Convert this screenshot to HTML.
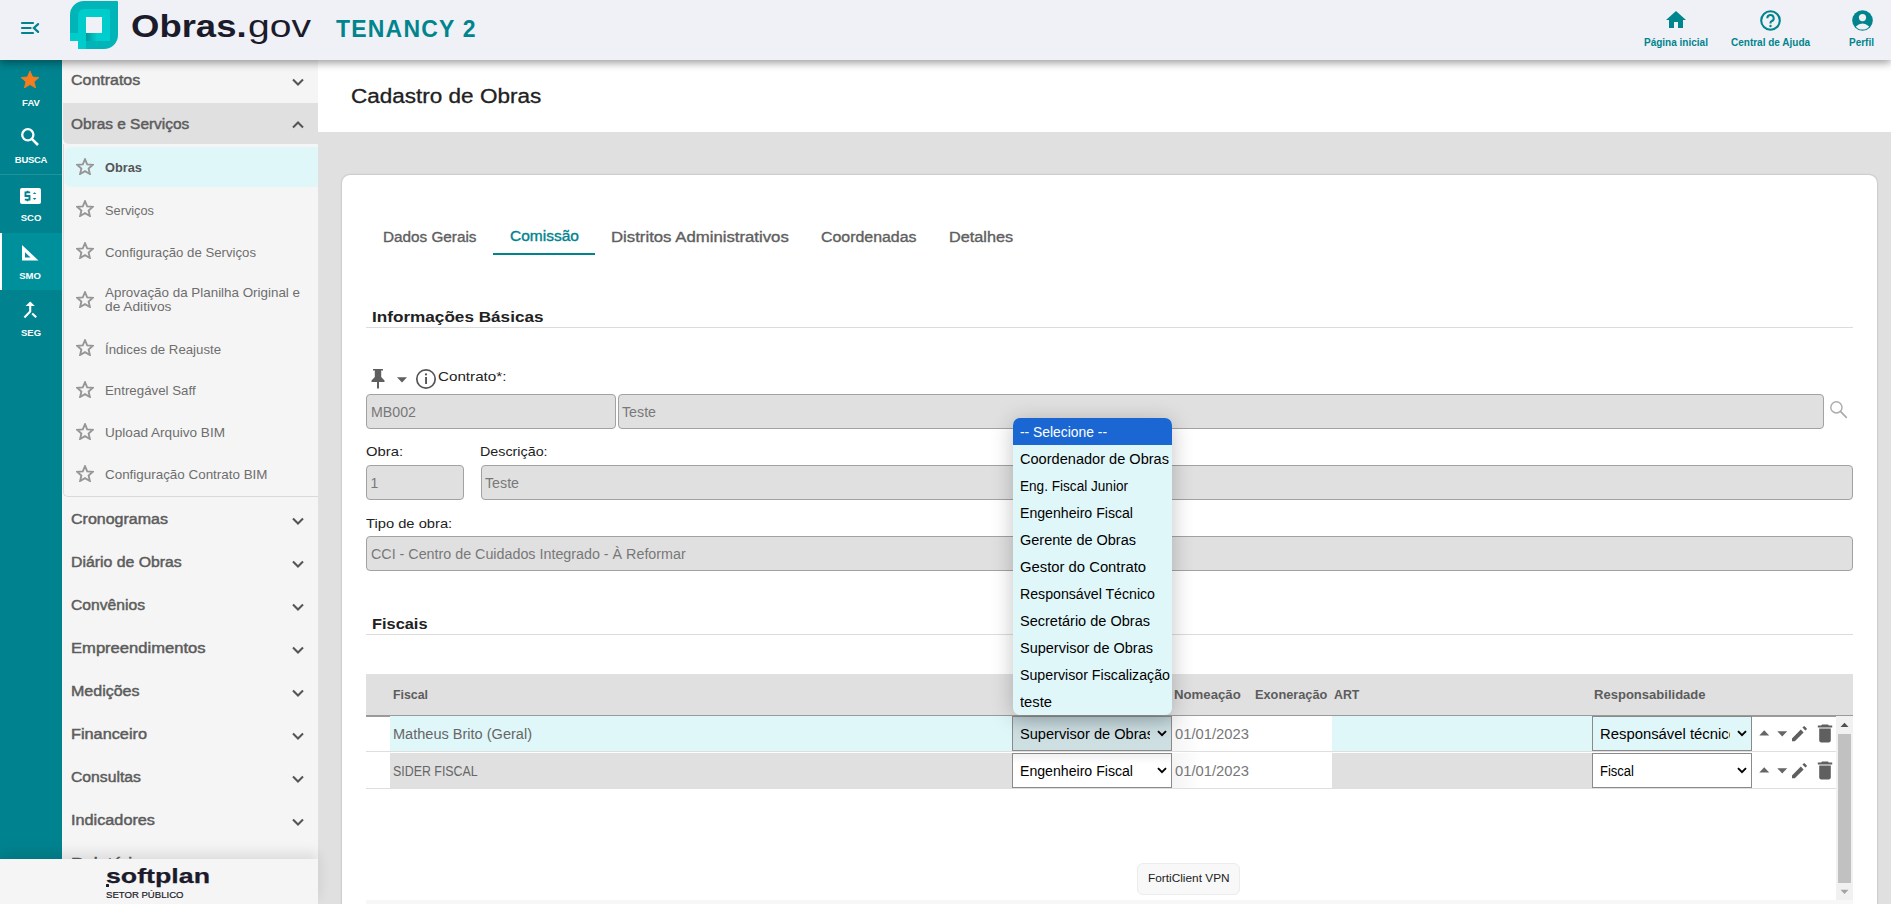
<!DOCTYPE html>
<html><head><meta charset="utf-8">
<style>
*{box-sizing:border-box;margin:0;padding:0}
html,body{width:1891px;height:904px;overflow:hidden;background:#e0e0e0;font-family:"Liberation Sans",sans-serif}
.abs{position:absolute}
.t{position:absolute;white-space:nowrap;line-height:1}
#header{position:absolute;left:0;top:0;width:1891px;height:60px;background:#eff1f6;z-index:10;box-shadow:0 3px 8px rgba(0,0,0,.38)}
#strip{position:absolute;left:0;top:60px;width:62px;height:844px;background:#00838f}
#panel{position:absolute;left:62px;top:60px;width:256px;height:799px;background:#f5f5f5;overflow:hidden}
#sfoot{position:absolute;left:0;top:859px;width:318px;height:45px;background:#f5f5f5;z-index:5;box-shadow:0 -6px 12px rgba(0,0,0,.10)}
#titlebar{position:absolute;left:318px;top:60px;width:1573px;height:72px;background:#fff}
#card{position:absolute;left:342px;top:175px;width:1535px;height:760px;background:#fff;border-radius:8px;box-shadow:0 0 2px rgba(0,0,0,.3)}
</style></head><body>
<div id="header">
  <svg class="abs" style="left:0;top:0" width="62" height="60" viewBox="0 0 62 60">
    <g stroke="#00838f" stroke-width="2.2" stroke-linecap="round" fill="none">
      <line x1="22" y1="23" x2="33" y2="23"/>
      <line x1="22" y1="28" x2="30.6" y2="28"/>
      <line x1="22" y1="33" x2="33" y2="33"/>
      <polyline points="38.1,24.1 33.9,28 38.1,31.9"/>
    </g>
  </svg>
  <svg class="abs" style="left:70px;top:1px" width="48" height="48" viewBox="0 0 48 48">
    <defs><linearGradient id="lg1" x1="0" x2="1" y1="0" y2="0"><stop offset="0" stop-color="#00989c"/><stop offset="0.45" stop-color="#00cdcd"/><stop offset="1" stop-color="#00cdcd"/></linearGradient></defs>
    <path d="M0,14 A14,14 0 0 1 14,0 L47,0 Q48,0 48,1 L48,34 A14,14 0 0 1 34,48 L8,48 L8,40 L0,40 Z" fill="#00b4b7"/>
    <path d="M8,14 A6,6 0 0 1 14,8 L38,8 Q40,8 40,10 L40,36 Q40,40 36,40 L8,40 Z" fill="#00cccc"/>
    <rect x="0" y="32" width="8" height="8" fill="#00cccc"/>
    <rect x="8" y="40" width="8" height="8" fill="#00cccc"/>
    <rect x="16" y="32" width="24" height="8" fill="url(#lg1)"/>
    <path d="M16,40 L36,40 Q40,40 40,36 L40,32 L16,32 Z" fill="url(#lg1)"/>
    <rect x="16" y="16" width="16" height="16" fill="#eff1f6"/>
  </svg>
  <div class="t" style="left:131px;top:10px;font-size:32px;font-weight:700;color:#1b1b2b;transform:scaleX(1.14);transform-origin:0 0">Obras.</div>
  <div class="t" style="left:248px;top:10px;font-size:32px;font-weight:400;color:#1b1b2b;transform:scaleX(1.22);transform-origin:0 0">gov</div>
  <div class="t" style="left:336px;top:18px;font-size:23px;font-weight:700;color:#00848e;letter-spacing:1.2px">TENANCY 2</div>

  <!-- right icons -->
  <svg class="abs" style="left:1665px;top:10px" width="22" height="20" viewBox="0 0 22 20">
    <path d="M11,1 L21,10 L18,10 L18,18 L13,18 L13,12 L9,12 L9,18 L4,18 L4,10 L1,10 Z" fill="#00848e"/>
  </svg>
  <div class="t" style="left:1644px;top:38px;font-size:10px;font-weight:700;color:#00848e">Página inicial</div>
  <svg class="abs" style="left:1759px;top:9px" width="23" height="23" viewBox="0 0 23 23">
    <circle cx="11.5" cy="11.5" r="9.3" stroke="#00848e" stroke-width="2.1" fill="none"/>
    <path d="M8.3,9.2 A3.2,3.2 0 1 1 12.6,12.2 Q11.5,12.7 11.5,14 L11.5,14.5" stroke="#00848e" stroke-width="2" fill="none"/>
    <circle cx="11.5" cy="17" r="1.2" fill="#00848e"/>
  </svg>
  <div class="t" style="left:1731px;top:38px;font-size:10px;font-weight:700;color:#00848e">Central de Ajuda</div>
  <svg class="abs" style="left:1851px;top:9px" width="23" height="23" viewBox="0 0 23 23">
    <circle cx="11.5" cy="11.5" r="10.3" fill="#00848e"/>
    <circle cx="11.5" cy="8.6" r="3.6" fill="#eff1f6"/>
    <path d="M4.8,17.4 Q11.5,11.6 18.2,17.4 A8.6,8.6 0 0 1 4.8,17.4 Z" fill="#eff1f6"/>
  </svg>
  <div class="t" style="left:1849px;top:38px;font-size:10px;font-weight:700;color:#00848e">Perfil</div>
</div>

<div id="strip">
<svg class="abs" style="left:21px;top:11px" width="18" height="17" viewBox="0 0 18 17"><path d="M9,0 L11.6,6 L18,6.5 L13.1,10.7 L14.6,17 L9,13.6 L3.4,17 L4.9,10.7 L0,6.5 L6.4,6 Z" fill="#f47d1f" stroke="#f47d1f" stroke-width="0.8" stroke-linejoin="round"/></svg>
<div class="t" style="left:-269px;width:600px;text-align:center;top:37.96px;font-size:9.5px;font-weight:700;color:#fff;letter-spacing:0px;">FAV</div>
<svg class="abs" style="left:20px;top:67px" width="20" height="20" viewBox="0 0 20 20"><circle cx="7.8" cy="7.8" r="5.6" stroke="#fff" stroke-width="2.3" fill="none"/><line x1="11.8" y1="11.8" x2="18" y2="18" stroke="#fff" stroke-width="2.6"/></svg>
<div class="t" style="left:-269px;width:600px;text-align:center;top:94.96px;font-size:9.5px;font-weight:700;color:#fff;letter-spacing:-0.3px;">BUSCA</div>
<div class="abs" style="left:0px;top:114px;width:62px;height:1px;background:#1f939c"></div>
<svg class="abs" style="left:20px;top:128px" width="21" height="16" viewBox="0 0 21 16"><rect x="0" y="0" width="21" height="16" rx="2" fill="#fff"/><path d="M10.2,4.4 L5.5,4.4 L5.5,8 L9.5,8 L9.5,11.6 L4.8,11.6 M7.5,2.8 L7.5,4.4 M7.5,11.6 L7.5,13.2" stroke="#00838f" stroke-width="1.9" fill="none"/><path d="M12.8,6 L16.4,6 L14.6,4.2 Z M12.8,9.9 L16.4,9.9 L14.6,11.9 Z" fill="#00838f"/></svg>
<div class="t" style="left:-269px;width:600px;text-align:center;top:153.46px;font-size:9.5px;font-weight:700;color:#fff;letter-spacing:0px;">SCO</div>
<div class="abs" style="left:0px;top:173px;width:62px;height:57px;background:#00909c"></div>
<div class="abs" style="left:0px;top:173px;width:2px;height:57px;background:#fff"></div>
<svg class="abs" style="left:22px;top:185px" width="17" height="16" viewBox="0 0 17 16"><path d="M0,0 L16.5,15.5 L0,15.5 Z M3,7.3 L3,12.6 L8.6,12.6 Z" fill="#fff" fill-rule="evenodd"/></svg>
<div class="t" style="left:-270px;width:600px;text-align:center;top:210.56px;font-size:9.5px;font-weight:700;color:#fff;letter-spacing:0px;">SMO</div>
<svg class="abs" style="left:22px;top:241px" width="17" height="18" viewBox="0 0 17 18"><path d="M3.6,5 L8.2,0.4 L12.8,5 Z" fill="#fff"/><path d="M8.2,4.5 L8.2,10.4 L2.4,16.4 M10.2,12.5 L14.2,16.3" stroke="#fff" stroke-width="2.1" fill="none" stroke-linejoin="round"/></svg>
<div class="t" style="left:-269px;width:600px;text-align:center;top:267.56px;font-size:9.5px;font-weight:700;color:#fff;letter-spacing:0px;">SEG</div>
</div>
<div id="panel">
<div class="t" style="left:8.5px;top:13.15px;font-size:14px;font-weight:400;color:#5c5c5c;letter-spacing:0px;transform:scaleX(1.1400);transform-origin:0 0;-webkit-text-stroke:0.45px #5c5c5c">Contratos</div>
<svg class="abs" style="left:230px;top:17.5px" width="12" height="8" viewBox="0 0 12 8"><path d="M1,1.5 L6,6.5 L11,1.5" stroke="#555" stroke-width="2.1" fill="none"/></svg>
<div class="abs" style="left:1px;top:43px;width:256px;height:41px;background:#e0e0e0;border-bottom-left-radius:6px"></div>
<div class="t" style="left:9px;top:57.15px;font-size:14px;font-weight:400;color:#5c5c5c;letter-spacing:0px;transform:scaleX(1.1008);transform-origin:0 0;-webkit-text-stroke:0.45px #5c5c5c">Obras e Serviços</div>
<svg class="abs" style="left:230px;top:61px" width="12" height="8" viewBox="0 0 12 8"><path d="M1,6.5 L6,1.5 L11,6.5" stroke="#555" stroke-width="2.1" fill="none"/></svg>
<div class="abs" style="left:0.5px;top:84px;width:260px;height:353px;border-left:1px solid #dadada;border-bottom:1px solid #dadada;border-bottom-left-radius:5px"></div>
<div class="abs" style="left:3px;top:87px;width:256px;height:40px;background:#e0f7fa;border-radius:6px 0 0 6px"></div>
<svg class="abs" style="left:14px;top:98.3px" width="18" height="17" viewBox="0 0 18 17"><path d="M9,1.2 L11.2,6.3 L16.8,6.8 L12.6,10.5 L13.9,16 L9,13.1 L4.1,16 L5.4,10.5 L1.2,6.8 L6.8,6.3 Z" stroke="#969696" stroke-width="1.85" fill="none" stroke-linejoin="miter"/></svg>
<div class="t" style="left:43px;top:101.00px;font-size:13px;font-weight:700;color:#555;letter-spacing:0px;transform:scaleX(0.9846);transform-origin:0 0;">Obras</div>
<svg class="abs" style="left:14px;top:140.0px" width="18" height="17" viewBox="0 0 18 17"><path d="M9,1.2 L11.2,6.3 L16.8,6.8 L12.6,10.5 L13.9,16 L9,13.1 L4.1,16 L5.4,10.5 L1.2,6.8 L6.8,6.3 Z" stroke="#969696" stroke-width="1.85" fill="none" stroke-linejoin="miter"/></svg>
<div class="t" style="left:43px;top:143.50px;font-size:13px;font-weight:400;color:#6e6e6e;letter-spacing:0px;transform:scaleX(0.9828);transform-origin:0 0;">Serviços</div>
<svg class="abs" style="left:14px;top:182.0px" width="18" height="17" viewBox="0 0 18 17"><path d="M9,1.2 L11.2,6.3 L16.8,6.8 L12.6,10.5 L13.9,16 L9,13.1 L4.1,16 L5.4,10.5 L1.2,6.8 L6.8,6.3 Z" stroke="#969696" stroke-width="1.85" fill="none" stroke-linejoin="miter"/></svg>
<div class="t" style="left:43px;top:185.50px;font-size:13px;font-weight:400;color:#6e6e6e;letter-spacing:0px;transform:scaleX(1.0144);transform-origin:0 0;">Configuração de Serviços</div>
<svg class="abs" style="left:14px;top:231.3px" width="18" height="17" viewBox="0 0 18 17"><path d="M9,1.2 L11.2,6.3 L16.8,6.8 L12.6,10.5 L13.9,16 L9,13.1 L4.1,16 L5.4,10.5 L1.2,6.8 L6.8,6.3 Z" stroke="#969696" stroke-width="1.85" fill="none" stroke-linejoin="miter"/></svg>
<div class="t" style="left:43px;top:226.00px;font-size:13px;font-weight:400;color:#6e6e6e;letter-spacing:0px;transform:scaleX(1.0299);transform-origin:0 0;">Aprovação da Planilha Original e</div>
<div class="t" style="left:43px;top:240.00px;font-size:13px;font-weight:400;color:#6e6e6e;letter-spacing:0px;transform:scaleX(1.0561);transform-origin:0 0;">de Aditivos</div>
<svg class="abs" style="left:14px;top:279.3px" width="18" height="17" viewBox="0 0 18 17"><path d="M9,1.2 L11.2,6.3 L16.8,6.8 L12.6,10.5 L13.9,16 L9,13.1 L4.1,16 L5.4,10.5 L1.2,6.8 L6.8,6.3 Z" stroke="#969696" stroke-width="1.85" fill="none" stroke-linejoin="miter"/></svg>
<div class="t" style="left:43px;top:282.50px;font-size:13px;font-weight:400;color:#6e6e6e;letter-spacing:0px;transform:scaleX(1.0159);transform-origin:0 0;">Índices de Reajuste</div>
<svg class="abs" style="left:14px;top:321.0px" width="18" height="17" viewBox="0 0 18 17"><path d="M9,1.2 L11.2,6.3 L16.8,6.8 L12.6,10.5 L13.9,16 L9,13.1 L4.1,16 L5.4,10.5 L1.2,6.8 L6.8,6.3 Z" stroke="#969696" stroke-width="1.85" fill="none" stroke-linejoin="miter"/></svg>
<div class="t" style="left:43px;top:324.20px;font-size:13px;font-weight:400;color:#6e6e6e;letter-spacing:0px;transform:scaleX(1.0219);transform-origin:0 0;">Entregável Saff</div>
<svg class="abs" style="left:14px;top:363.1px" width="18" height="17" viewBox="0 0 18 17"><path d="M9,1.2 L11.2,6.3 L16.8,6.8 L12.6,10.5 L13.9,16 L9,13.1 L4.1,16 L5.4,10.5 L1.2,6.8 L6.8,6.3 Z" stroke="#969696" stroke-width="1.85" fill="none" stroke-linejoin="miter"/></svg>
<div class="t" style="left:43px;top:366.30px;font-size:13px;font-weight:400;color:#6e6e6e;letter-spacing:0px;transform:scaleX(1.0443);transform-origin:0 0;">Upload Arquivo BIM</div>
<svg class="abs" style="left:14px;top:404.9px" width="18" height="17" viewBox="0 0 18 17"><path d="M9,1.2 L11.2,6.3 L16.8,6.8 L12.6,10.5 L13.9,16 L9,13.1 L4.1,16 L5.4,10.5 L1.2,6.8 L6.8,6.3 Z" stroke="#969696" stroke-width="1.85" fill="none" stroke-linejoin="miter"/></svg>
<div class="t" style="left:43px;top:408.10px;font-size:13px;font-weight:400;color:#6e6e6e;letter-spacing:0px;transform:scaleX(1.0315);transform-origin:0 0;">Configuração Contrato BIM</div>
<div class="t" style="left:8.5px;top:452.35px;font-size:14px;font-weight:400;color:#5c5c5c;letter-spacing:0px;transform:scaleX(1.1435);transform-origin:0 0;-webkit-text-stroke:0.45px #5c5c5c">Cronogramas</div>
<svg class="abs" style="left:230px;top:457.20000000000005px" width="12" height="8" viewBox="0 0 12 8"><path d="M1,1.5 L6,6.5 L11,1.5" stroke="#555" stroke-width="2.1" fill="none"/></svg>
<div class="t" style="left:8.5px;top:495.35px;font-size:14px;font-weight:400;color:#5c5c5c;letter-spacing:0px;transform:scaleX(1.1291);transform-origin:0 0;-webkit-text-stroke:0.45px #5c5c5c">Diário de Obras</div>
<svg class="abs" style="left:230px;top:500.20000000000005px" width="12" height="8" viewBox="0 0 12 8"><path d="M1,1.5 L6,6.5 L11,1.5" stroke="#555" stroke-width="2.1" fill="none"/></svg>
<div class="t" style="left:8.5px;top:538.35px;font-size:14px;font-weight:400;color:#5c5c5c;letter-spacing:0px;transform:scaleX(1.1186);transform-origin:0 0;-webkit-text-stroke:0.45px #5c5c5c">Convênios</div>
<svg class="abs" style="left:230px;top:543.2px" width="12" height="8" viewBox="0 0 12 8"><path d="M1,1.5 L6,6.5 L11,1.5" stroke="#555" stroke-width="2.1" fill="none"/></svg>
<div class="t" style="left:8.5px;top:581.35px;font-size:14px;font-weight:400;color:#5c5c5c;letter-spacing:0px;transform:scaleX(1.1846);transform-origin:0 0;-webkit-text-stroke:0.45px #5c5c5c">Empreendimentos</div>
<svg class="abs" style="left:230px;top:586.2px" width="12" height="8" viewBox="0 0 12 8"><path d="M1,1.5 L6,6.5 L11,1.5" stroke="#555" stroke-width="2.1" fill="none"/></svg>
<div class="t" style="left:8.5px;top:624.35px;font-size:14px;font-weight:400;color:#5c5c5c;letter-spacing:0px;transform:scaleX(1.1432);transform-origin:0 0;-webkit-text-stroke:0.45px #5c5c5c">Medições</div>
<svg class="abs" style="left:230px;top:629.2px" width="12" height="8" viewBox="0 0 12 8"><path d="M1,1.5 L6,6.5 L11,1.5" stroke="#555" stroke-width="2.1" fill="none"/></svg>
<div class="t" style="left:8.5px;top:667.35px;font-size:14px;font-weight:400;color:#5c5c5c;letter-spacing:0px;transform:scaleX(1.1625);transform-origin:0 0;-webkit-text-stroke:0.45px #5c5c5c">Financeiro</div>
<svg class="abs" style="left:230px;top:672.2px" width="12" height="8" viewBox="0 0 12 8"><path d="M1,1.5 L6,6.5 L11,1.5" stroke="#555" stroke-width="2.1" fill="none"/></svg>
<div class="t" style="left:8.5px;top:710.35px;font-size:14px;font-weight:400;color:#5c5c5c;letter-spacing:0px;transform:scaleX(1.1242);transform-origin:0 0;-webkit-text-stroke:0.45px #5c5c5c">Consultas</div>
<svg class="abs" style="left:230px;top:715.2px" width="12" height="8" viewBox="0 0 12 8"><path d="M1,1.5 L6,6.5 L11,1.5" stroke="#555" stroke-width="2.1" fill="none"/></svg>
<div class="t" style="left:8.5px;top:753.35px;font-size:14px;font-weight:400;color:#5c5c5c;letter-spacing:0px;transform:scaleX(1.1604);transform-origin:0 0;-webkit-text-stroke:0.45px #5c5c5c">Indicadores</div>
<svg class="abs" style="left:230px;top:758.2px" width="12" height="8" viewBox="0 0 12 8"><path d="M1,1.5 L6,6.5 L11,1.5" stroke="#555" stroke-width="2.1" fill="none"/></svg>
<div class="t" style="left:8.5px;top:796.35px;font-size:14px;font-weight:400;color:#5c5c5c;letter-spacing:0px;transform:scaleX(1.2692);transform-origin:0 0;-webkit-text-stroke:0.45px #5c5c5c">Relatórios</div>
<svg class="abs" style="left:230px;top:801.2px" width="12" height="8" viewBox="0 0 12 8"><path d="M1,1.5 L6,6.5 L11,1.5" stroke="#555" stroke-width="2.1" fill="none"/></svg>
</div>
<div id="sfoot">
<div class="t" style="left:105.8px;top:6.42px;font-size:21px;font-weight:700;color:#1b1b2b;letter-spacing:0px;transform:scaleX(1.2734);transform-origin:0 0;-webkit-text-stroke:0.25px #1b1b2b">softplan</div>
<div class="t" style="left:105.8px;top:31.88px;font-size:9px;font-weight:400;color:#1b1b2b;letter-spacing:0px;transform:scaleX(1.0637);transform-origin:0 0;-webkit-text-stroke:0.2px #1b1b2b">SETOR PÚBLICO</div>
<div class="abs" style="left:106px;top:25.299999999999955px;width:2.6px;height:3px;background:#1b1b2b;border-radius:0.5px"></div>
</div>
<div id="titlebar"></div>
<div id="card"></div>
<div class="t" style="left:350.5px;top:86.07px;font-size:20px;font-weight:400;color:#212121;letter-spacing:0px;transform:scaleX(1.1255);transform-origin:0 0;-webkit-text-stroke:0.3px #212121">Cadastro de Obras</div>
<div class="t" style="left:383px;top:230.15px;font-size:14px;font-weight:400;color:#5f5f5f;letter-spacing:0px;transform:scaleX(1.0924);transform-origin:0 0;-webkit-text-stroke:0.35px #5f5f5f">Dados Gerais</div>
<div class="t" style="left:509.6px;top:229.35px;font-size:14px;font-weight:400;color:#00838f;letter-spacing:0px;transform:scaleX(1.1084);transform-origin:0 0;-webkit-text-stroke:0.35px #00838f">Comissão</div>
<div class="t" style="left:610.8px;top:230.15px;font-size:14px;font-weight:400;color:#5f5f5f;letter-spacing:0px;transform:scaleX(1.1966);transform-origin:0 0;-webkit-text-stroke:0.35px #5f5f5f">Distritos Administrativos</div>
<div class="t" style="left:820.9px;top:230.15px;font-size:14px;font-weight:400;color:#5f5f5f;letter-spacing:0px;transform:scaleX(1.1361);transform-origin:0 0;-webkit-text-stroke:0.35px #5f5f5f">Coordenadas</div>
<div class="t" style="left:948.7px;top:230.15px;font-size:14px;font-weight:400;color:#5f5f5f;letter-spacing:0px;transform:scaleX(1.1599);transform-origin:0 0;-webkit-text-stroke:0.35px #5f5f5f">Detalhes</div>
<div class="abs" style="left:493px;top:253px;width:102px;height:2px;background:#00838f"></div>
<div class="t" style="left:371.8px;top:309.15px;font-size:15.3px;font-weight:700;color:#212121;letter-spacing:0px;transform:scaleX(1.1206);transform-origin:0 0;">Informações Básicas</div>
<div class="abs" style="left:366px;top:327px;width:1487px;height:1px;background:#dcdcdc"></div>
<svg class="abs" style="left:370px;top:368px" width="16" height="21" viewBox="0 0 16 21"><path d="M3,1 L13,1 L13,2.5 L11.2,2.5 L11.2,9 L14.5,12.5 L14.5,14 L9,14 L9,20.5 L7,20.5 L7,14 L1.5,14 L1.5,12.5 L4.8,9 L4.8,2.5 L3,2.5 Z" fill="#5f5f5f"/></svg>
<svg class="abs" style="left:397px;top:377px" width="10" height="6" viewBox="0 0 10 6"><path d="M0,0.3 L10,0.3 L5,5.5 Z" fill="#5f5f5f"/></svg>
<svg class="abs" style="left:415px;top:368px" width="22" height="22" viewBox="0 0 22 22"><circle cx="11" cy="11" r="9.2" stroke="#555" stroke-width="1.7" fill="none"/><rect x="10.1" y="9" width="1.9" height="7" fill="#555"/><circle cx="11" cy="6.4" r="1.15" fill="#555"/></svg>
<div class="t" style="left:438.3px;top:370.43px;font-size:13.2px;font-weight:400;color:#222;letter-spacing:0px;transform:scaleX(1.1517);transform-origin:0 0;">Contrato*:</div>
<div class="abs" style="left:366px;top:394px;width:250px;height:35px;background:#e0e0e0;border:1px solid #a2a2a2;border-radius:4px"></div>
<div class="t" style="left:370.6px;top:404.95px;font-size:14px;font-weight:400;color:#787878;letter-spacing:0px;transform:scaleX(1.0144);transform-origin:0 0;">MB002</div>
<div class="abs" style="left:618px;top:394px;width:1206px;height:35px;background:#e0e0e0;border:1px solid #a2a2a2;border-radius:4px"></div>
<div class="t" style="left:622.4px;top:404.95px;font-size:14px;font-weight:400;color:#787878;letter-spacing:0px;transform:scaleX(1.0159);transform-origin:0 0;">Teste</div>
<svg class="abs" style="left:1828px;top:399px" width="22" height="22" viewBox="0 0 22 22"><circle cx="8.4" cy="8.4" r="5.6" stroke="#ababab" stroke-width="1.4" fill="none"/><line x1="12.4" y1="12.4" x2="18.3" y2="18.3" stroke="#ababab" stroke-width="1.7" stroke-linecap="round"/></svg>
<div class="t" style="left:366px;top:445.37px;font-size:13.5px;font-weight:400;color:#222;letter-spacing:0px;transform:scaleX(1.0958);transform-origin:0 0;">Obra:</div>
<div class="t" style="left:480.3px;top:445.37px;font-size:13.5px;font-weight:400;color:#222;letter-spacing:0px;transform:scaleX(1.0599);transform-origin:0 0;">Descrição:</div>
<div class="abs" style="left:366px;top:465px;width:98px;height:35px;background:#e0e0e0;border:1px solid #a2a2a2;border-radius:4px"></div>
<div class="t" style="left:370.6px;top:475.95px;font-size:14px;font-weight:400;color:#787878;letter-spacing:0px;">1</div>
<div class="abs" style="left:480.5px;top:465px;width:1372.5px;height:35px;background:#e0e0e0;border:1px solid #a2a2a2;border-radius:4px"></div>
<div class="t" style="left:484.6px;top:475.95px;font-size:14px;font-weight:400;color:#787878;letter-spacing:0px;transform:scaleX(1.0159);transform-origin:0 0;">Teste</div>
<div class="t" style="left:366px;top:516.57px;font-size:13.5px;font-weight:400;color:#222;letter-spacing:0px;transform:scaleX(1.0903);transform-origin:0 0;">Tipo de obra:</div>
<div class="abs" style="left:366px;top:536px;width:1487px;height:35px;background:#e0e0e0;border:1px solid #a2a2a2;border-radius:4px"></div>
<div class="t" style="left:370.6px;top:547.15px;font-size:14px;font-weight:400;color:#787878;letter-spacing:0px;transform:scaleX(1.0213);transform-origin:0 0;">CCI - Centro de Cuidados Integrado - À Reformar</div>
<div class="t" style="left:371.7px;top:615.85px;font-size:15.3px;font-weight:700;color:#212121;letter-spacing:0px;transform:scaleX(1.0699);transform-origin:0 0;">Fiscais</div>
<div class="abs" style="left:366px;top:634px;width:1487px;height:1px;background:#dcdcdc"></div>
<div class="abs" style="left:366px;top:674px;width:1487px;height:41px;background:#e0e0e0"></div>
<div class="abs" style="left:366px;top:715px;width:1487px;height:1.5px;background:#9a9a9a"></div>
<div class="t" style="left:393.3px;top:688.84px;font-size:12px;font-weight:700;color:#5c5c5c;letter-spacing:0px;transform:scaleX(1.0285);transform-origin:0 0;">Fiscal</div>
<div class="t" style="left:1174.4px;top:688.84px;font-size:12px;font-weight:700;color:#5c5c5c;letter-spacing:0px;transform:scaleX(1.1004);transform-origin:0 0;">Nomeação</div>
<div class="t" style="left:1254.5px;top:688.84px;font-size:12px;font-weight:700;color:#5c5c5c;letter-spacing:0px;transform:scaleX(1.0625);transform-origin:0 0;">Exoneração</div>
<div class="t" style="left:1334.2px;top:688.84px;font-size:12px;font-weight:700;color:#5c5c5c;letter-spacing:0px;transform:scaleX(1.0295);transform-origin:0 0;">ART</div>
<div class="t" style="left:1594px;top:688.84px;font-size:12px;font-weight:700;color:#5c5c5c;letter-spacing:0px;transform:scaleX(1.0866);transform-origin:0 0;">Responsabilidade</div>
<div class="abs" style="left:390px;top:716px;width:622px;height:35px;background:#e0f7fa"></div>
<div class="abs" style="left:1332px;top:716px;width:260px;height:35px;background:#e0f7fa"></div>
<div class="abs" style="left:366px;top:751px;width:1470px;height:1px;background:#dedede"></div>
<div class="abs" style="left:390px;top:752.5px;width:622px;height:35.5px;background:#e0e0e0"></div>
<div class="abs" style="left:1332px;top:752.5px;width:260px;height:35.5px;background:#e0e0e0"></div>
<div class="abs" style="left:366px;top:788px;width:1470px;height:1px;background:#dedede"></div>
<div class="t" style="left:393.3px;top:727.15px;font-size:14px;font-weight:400;color:#666;letter-spacing:0px;transform:scaleX(1.0386);transform-origin:0 0;">Matheus Brito (Geral)</div>
<div class="t" style="left:393.3px;top:764.15px;font-size:14px;font-weight:400;color:#666;letter-spacing:0px;transform:scaleX(0.8850);transform-origin:0 0;">SIDER FISCAL</div>
<div class="abs" style="left:1012px;top:716.3px;width:160px;height:34.5px;background:linear-gradient(#b9cdd1,#cbdde0 40%,#cfe0e3);border:1px solid #8a8a8a"></div>
<div class="abs" style="left:1012px;top:716.3px;width:138px;height:34.5px;overflow:hidden"><div class="t" style="left:8.3px;top:10.65px;font-size:14px;font-weight:400;color:#000;letter-spacing:0px;transform:scaleX(1.0436);transform-origin:0 0;">Supervisor de Obras</div></div>
<svg class="abs" style="left:1157px;top:730.3px" width="10" height="7" viewBox="0 0 10 7"><path d="M1,1.2 L5,5.2 L9,1.2" stroke="#000" stroke-width="1.9" fill="none"/></svg>
<div class="abs" style="left:1012px;top:753px;width:160px;height:35px;background:linear-gradient(#f1f1f1,#fff 30%);border:1px solid #8a8a8a"></div>
<div class="abs" style="left:1012px;top:753px;width:138px;height:35px;overflow:hidden"><div class="t" style="left:8.3px;top:10.65px;font-size:14px;font-weight:400;color:#000;letter-spacing:0px;transform:scaleX(1.0084);transform-origin:0 0;">Engenheiro Fiscal</div></div>
<svg class="abs" style="left:1157px;top:767px" width="10" height="7" viewBox="0 0 10 7"><path d="M1,1.2 L5,5.2 L9,1.2" stroke="#000" stroke-width="1.9" fill="none"/></svg>
<div class="abs" style="left:1172px;top:716px;width:160px;height:35px;background:linear-gradient(90deg,#f4f4f4,#fff 30px)"></div>
<div class="abs" style="left:1172px;top:752.5px;width:160px;height:35.5px;background:linear-gradient(90deg,#f4f4f4,#fff 30px)"></div>
<div class="t" style="left:1175.1px;top:726.85px;font-size:14px;font-weight:400;color:#777;letter-spacing:0px;transform:scaleX(1.0560);transform-origin:0 0;">01/01/2023</div>
<div class="t" style="left:1175.1px;top:763.95px;font-size:14px;font-weight:400;color:#777;letter-spacing:0px;transform:scaleX(1.0560);transform-origin:0 0;">01/01/2023</div>
<div class="abs" style="left:1592px;top:716.3px;width:160px;height:34.5px;background:#e0f7fa;border:1px solid #8a8a8a"></div>
<div class="abs" style="left:1592px;top:716.3px;width:138px;height:34.5px;overflow:hidden"><div class="t" style="left:8.3px;top:10.65px;font-size:14px;font-weight:400;color:#000;letter-spacing:0px;transform:scaleX(1.0605);transform-origin:0 0;">Responsável técnico</div></div>
<svg class="abs" style="left:1737px;top:730.3px" width="10" height="7" viewBox="0 0 10 7"><path d="M1,1.2 L5,5.2 L9,1.2" stroke="#000" stroke-width="1.9" fill="none"/></svg>
<div class="abs" style="left:1592px;top:753px;width:160px;height:35px;background:#fff;border:1px solid #8a8a8a"></div>
<div class="abs" style="left:1592px;top:753px;width:150px;height:35px;overflow:hidden"><div class="t" style="left:8.3px;top:10.65px;font-size:14px;font-weight:400;color:#000;letter-spacing:0px;transform:scaleX(0.9299);transform-origin:0 0;">Fiscal</div></div>
<svg class="abs" style="left:1737px;top:767px" width="10" height="7" viewBox="0 0 10 7"><path d="M1,1.2 L5,5.2 L9,1.2" stroke="#000" stroke-width="1.9" fill="none"/></svg>
<svg class="abs" style="left:1759px;top:730px" width="11" height="6" viewBox="0 0 11 6"><path d="M0.3,5.5 L5.2,0.3 L10.2,5.5 Z" fill="#666"/></svg>
<svg class="abs" style="left:1777px;top:730.5px" width="11" height="6" viewBox="0 0 11 6"><path d="M0.3,0.3 L10.2,0.3 L5.2,5.5 Z" fill="#666"/></svg>
<svg class="abs" style="left:1791px;top:725px" width="17" height="17" viewBox="0 0 17 17"><path d="M1,13.4 L1,16.2 L3.8,16.2 L12.6,7.4 L9.8,4.6 Z M14.4,5.6 L15.6,4.4 Q16.2,3.8 15.6,3.2 L13.8,1.4 Q13.2,0.8 12.6,1.4 L11.4,2.6 Z" fill="#5f5f5f"/></svg>
<svg class="abs" style="left:1817px;top:724px" width="16" height="19" viewBox="0 0 16 19"><path d="M5,0.6 L11,0.6 L11.8,1.6 L15.2,1.6 L15.2,3.4 L0.8,3.4 L0.8,1.6 L4.2,1.6 Z M2.2,4.6 L13.8,4.6 L13.8,16.6 Q13.8,18.4 12,18.4 L4,18.4 Q2.2,18.4 2.2,16.6 Z" fill="#5f5f5f"/></svg>
<svg class="abs" style="left:1759px;top:767px" width="11" height="6" viewBox="0 0 11 6"><path d="M0.3,5.5 L5.2,0.3 L10.2,5.5 Z" fill="#666"/></svg>
<svg class="abs" style="left:1777px;top:767.5px" width="11" height="6" viewBox="0 0 11 6"><path d="M0.3,0.3 L10.2,0.3 L5.2,5.5 Z" fill="#666"/></svg>
<svg class="abs" style="left:1791px;top:762px" width="17" height="17" viewBox="0 0 17 17"><path d="M1,13.4 L1,16.2 L3.8,16.2 L12.6,7.4 L9.8,4.6 Z M14.4,5.6 L15.6,4.4 Q16.2,3.8 15.6,3.2 L13.8,1.4 Q13.2,0.8 12.6,1.4 L11.4,2.6 Z" fill="#5f5f5f"/></svg>
<svg class="abs" style="left:1817px;top:761px" width="16" height="19" viewBox="0 0 16 19"><path d="M5,0.6 L11,0.6 L11.8,1.6 L15.2,1.6 L15.2,3.4 L0.8,3.4 L0.8,1.6 L4.2,1.6 Z M2.2,4.6 L13.8,4.6 L13.8,16.6 Q13.8,18.4 12,18.4 L4,18.4 Q2.2,18.4 2.2,16.6 Z" fill="#5f5f5f"/></svg>
<div class="abs" style="left:1836px;top:716px;width:17px;height:184px;background:#f1f1f1"></div>
<div class="abs" style="left:1838px;top:734px;width:13px;height:149px;background:#c1c1c1"></div>
<svg class="abs" style="left:1840px;top:722px" width="9" height="6" viewBox="0 0 9 6"><path d="M0.5,5 L4.5,0.8 L8.5,5 Z" fill="#505050"/></svg>
<svg class="abs" style="left:1840px;top:889px" width="9" height="6" viewBox="0 0 9 6"><path d="M0.5,0.8 L8.5,0.8 L4.5,5 Z" fill="#a3a3a3"/></svg>
<div class="abs" style="left:366px;top:900px;width:1487px;height:4px;background:#f7f7f7"></div>
<div class="abs" style="left:1137px;top:863px;width:103px;height:32px;background:#f8f8f8;border:1px solid #ececec;border-radius:6px"></div>
<div class="t" style="left:1147.6px;top:873.07px;font-size:11.5px;font-weight:400;color:#222;letter-spacing:0px;transform:scaleX(1.0297);transform-origin:0 0;">FortiClient VPN</div>
<div class="abs" style="left:1012.5px;top:418px;width:159.5px;height:297px;background:#e0f7fa;border-radius:7px;box-shadow:0 3px 22px rgba(0,0,0,.24);overflow:hidden">
<div class="abs" style="left:0px;top:0px;width:160px;height:27px;background:#1a67d3"></div>
<div class="t" style="left:7.5px;top:7.35px;font-size:14px;font-weight:400;color:#fff;letter-spacing:0px;transform:scaleX(0.9895);transform-origin:0 0;">-- Selecione --</div>
<div class="t" style="left:7.5px;top:34.35px;font-size:14px;font-weight:400;color:#000;letter-spacing:0px;transform:scaleX(1.0405);transform-origin:0 0;">Coordenador de Obras</div>
<div class="t" style="left:7.5px;top:61.35px;font-size:14px;font-weight:400;color:#000;letter-spacing:0px;transform:scaleX(0.9705);transform-origin:0 0;">Eng. Fiscal Junior</div>
<div class="t" style="left:7.5px;top:88.35px;font-size:14px;font-weight:400;color:#000;letter-spacing:0px;transform:scaleX(1.0084);transform-origin:0 0;">Engenheiro Fiscal</div>
<div class="t" style="left:7.5px;top:115.35px;font-size:14px;font-weight:400;color:#000;letter-spacing:0px;transform:scaleX(1.0351);transform-origin:0 0;">Gerente de Obras</div>
<div class="t" style="left:7.5px;top:142.35px;font-size:14px;font-weight:400;color:#000;letter-spacing:0px;transform:scaleX(1.0583);transform-origin:0 0;">Gestor do Contrato</div>
<div class="t" style="left:7.5px;top:169.35px;font-size:14px;font-weight:400;color:#000;letter-spacing:0px;transform:scaleX(1.0104);transform-origin:0 0;">Responsável Técnico</div>
<div class="t" style="left:7.5px;top:196.35px;font-size:14px;font-weight:400;color:#000;letter-spacing:0px;transform:scaleX(1.0375);transform-origin:0 0;">Secretário de Obras</div>
<div class="t" style="left:7.5px;top:223.35px;font-size:14px;font-weight:400;color:#000;letter-spacing:0px;transform:scaleX(1.0358);transform-origin:0 0;">Supervisor de Obras</div>
<div class="t" style="left:7.5px;top:250.35px;font-size:14px;font-weight:400;color:#000;letter-spacing:0px;transform:scaleX(1.0146);transform-origin:0 0;">Supervisor Fiscalização</div>
<div class="t" style="left:7.5px;top:277.35px;font-size:14px;font-weight:400;color:#000;letter-spacing:0px;transform:scaleX(1.0540);transform-origin:0 0;">teste</div>
</div>
</body></html>
